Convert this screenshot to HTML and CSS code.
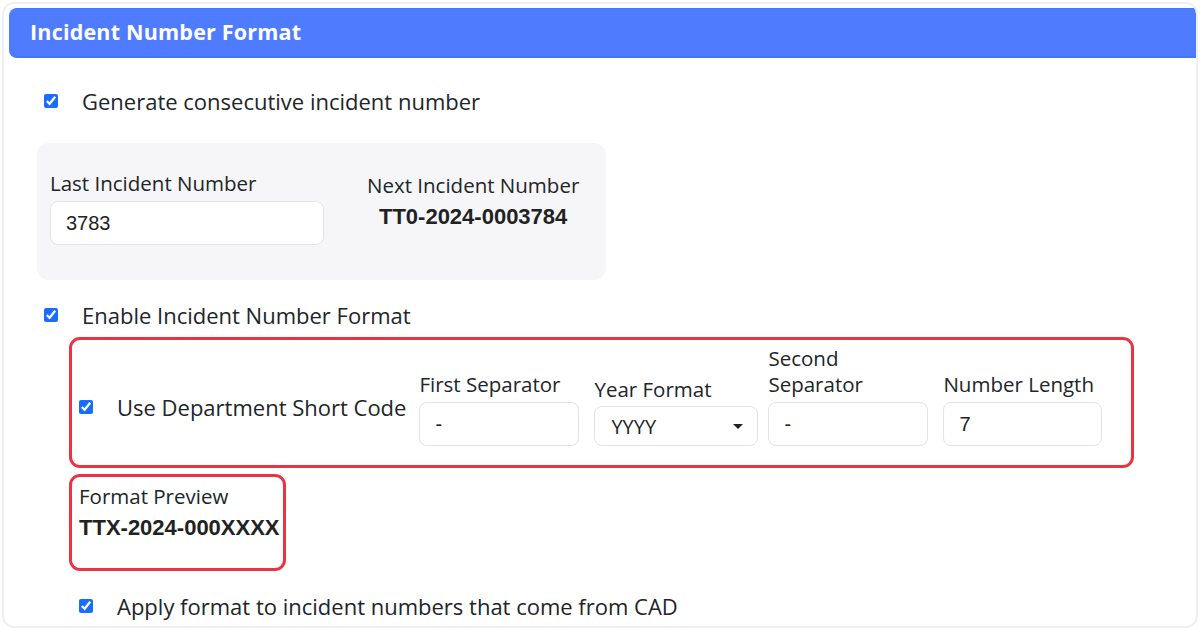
FILE: index.html
```html
<!DOCTYPE html>
<html lang="en">
<head>
    <meta charset="UTF-8">
    <meta name="viewport" content="width=device-width, initial-scale=1.0">
    <title>Incident Number Format</title>
    <link rel="stylesheet" href="styles.css">
</head>
<body>

    <div class="card">
        <div class="card-header">Incident Number Format</div>

        <div class="card-body">
            <label class="check-row first-row">
                <input type="checkbox" checked>
                <span>Generate consecutive incident number</span>
            </label>

            <div class="number-box">
                <div class="last-number">
                    <label for="lastNumber">Last Incident Number</label>
                    <input type="text" id="lastNumber" class="text-input" value="3783">
                </div>
                <div class="next-number">
                    <div class="next-label">Next Incident Number</div>
                    <div class="next-value">TT0-2024-0003784</div>
                </div>
            </div>

            <label class="check-row enable-row">
                <input type="checkbox" checked>
                <span>Enable Incident Number Format</span>
            </label>

            <div class="format-box">
                <label class="check-row short-code">
                    <input type="checkbox" checked>
                    <span>Use Department Short Code</span>
                </label>

                <div class="field first-sep">
                    <label for="firstSep">First Separator</label>
                    <input type="text" id="firstSep" class="text-input" value="-">
                </div>

                <div class="field year-field">
                    <label for="yearFormat">Year Format</label>
                    <div class="select-wrap">
                        <select id="yearFormat">
                            <option>YYYY</option>
                            <option>YY</option>
                        </select>
                    </div>
                </div>

                <div class="field second-sep">
                    <label for="secondSep">Second Separator</label>
                    <input type="text" id="secondSep" class="text-input" value="-">
                </div>

                <div class="field length-field">
                    <label for="numLength">Number Length</label>
                    <input type="text" id="numLength" class="text-input" value="7">
                </div>
            </div>

            <div class="preview-box">
                <div class="preview-label">Format Preview</div>
                <div class="preview-value">TTX-2024-000XXXX</div>
            </div>

            <label class="check-row cad-row">
                <input type="checkbox" checked>
                <span>Apply format to incident numbers that come from CAD</span>
            </label>
        </div>
    </div>

</body>
</html>
```

FILE: styles.css
```css
body {
    margin: 0;
    background-color: #fff;
    font-family: "Open Sans", Arial, sans-serif;
    color: #212529;
}

.card {
    margin: 2px;
    height: 626px;
    box-sizing: border-box;
    border: 2px solid #eff0f5;
    border-radius: 12px;
    overflow: hidden;
}

.card-header {
    margin: 4px -2px 0 5px;
    height: 50px;
    box-sizing: border-box;
    padding-left: 21px;
    background-color: #4f7cff;
    border-top: 1px solid #4275ff;
    border-bottom: 2px solid #4275ff;
    border-radius: 8px 0 0 8px;
    color: #fff;
    font-size: 21.5px;
    font-weight: 700;
    line-height: 46px;
    letter-spacing: 0.2px;
}

.card-body {
    padding-left: 40px;
}

/* checkbox rows */
.check-row {
    display: flex;
    align-items: center;
    height: 30px;
    font-size: 22px;
}

.check-row input {
    width: 14px;
    height: 14px;
    margin: 0 24px 0 0;
    accent-color: #1a6cff;
}

.first-row {
    margin-top: 28px;
}

.enable-row {
    margin-top: 20px;
}

/* last / next number box */
.number-box {
    display: flex;
    gap: 43px;
    width: 569px;
    height: 137px;
    box-sizing: border-box;
    margin: 27px 0 0 -7px;
    padding: 27px 0 0 13px;
    background-color: #f6f6f8;
    border-radius: 12px;
}

.last-number {
    display: flex;
    flex-direction: column;
    width: 274px;
}

.last-number label,
.field label,
.next-label,
.preview-label {
    font-size: 20.5px;
    line-height: 26px;
}

.last-number label {
    margin-bottom: 5px;
}

.text-input {
    height: 44px;
    box-sizing: border-box;
    padding: 0 15px;
    border: 1px solid #e2e3e7;
    border-radius: 8px;
    background-color: #fff;
    font-family: "Liberation Sans", Arial, sans-serif;
    font-size: 20px;
    color: #222;
    outline: none;
}

.next-number {
    display: flex;
    flex-direction: column;
    align-items: center;
    padding-top: 2px;
}

.next-value {
    margin-top: 5px;
    font-family: "Liberation Sans", Arial, sans-serif;
    font-size: 22px;
    font-weight: 700;
    line-height: 28px;
    color: #222;
}

/* format options */
.format-box {
    display: flex;
    align-items: flex-end;
    width: 1065px;
    height: 131px;
    box-sizing: border-box;
    margin: 7px 0 0 25px;
    padding: 0 7px 19px;
    border: 3px solid #ea3343;
    border-radius: 11px;
}

.short-code {
    align-self: center;
    margin-top: 27px;
}

.field {
    display: flex;
    flex-direction: column;
    width: 160px;
}

.field label {
    margin-bottom: 5px;
}

.first-sep {
    margin-left: 13px;
}

.year-field {
    width: 164px;
    margin-left: 15px;
}

.year-field label {
    margin-bottom: 4px;
}

.second-sep {
    margin-left: 10px;
}

.length-field {
    width: 159px;
    margin-left: 15px;
}

.select-wrap {
    position: relative;
}

.select-wrap::after {
    content: "";
    position: absolute;
    right: 15px;
    top: 18px;
    border-left: 5px solid transparent;
    border-right: 5px solid transparent;
    border-top: 5px solid #222;
    pointer-events: none;
}

.select-wrap select {
    appearance: none;
    width: 100%;
    height: 40px;
    padding: 0 16px;
    border: 1px solid #e2e3e7;
    border-radius: 8px;
    background-color: #fff;
    font-family: "Open Sans", Arial, sans-serif;
    font-size: 20px;
    color: #222;
    outline: none;
}

/* preview */
.preview-box {
    width: 217px;
    height: 97px;
    box-sizing: border-box;
    margin: 6px 0 0 25px;
    padding: 6px 0 0 7px;
    border: 3px solid #ea3343;
    border-radius: 11px;
}

.preview-value {
    margin-top: 5px;
    font-family: "Liberation Sans", Arial, sans-serif;
    font-size: 22px;
    font-weight: 700;
    line-height: 28px;
    color: #222;
}

.cad-row {
    margin: 20px 0 0 35px;
}
```
